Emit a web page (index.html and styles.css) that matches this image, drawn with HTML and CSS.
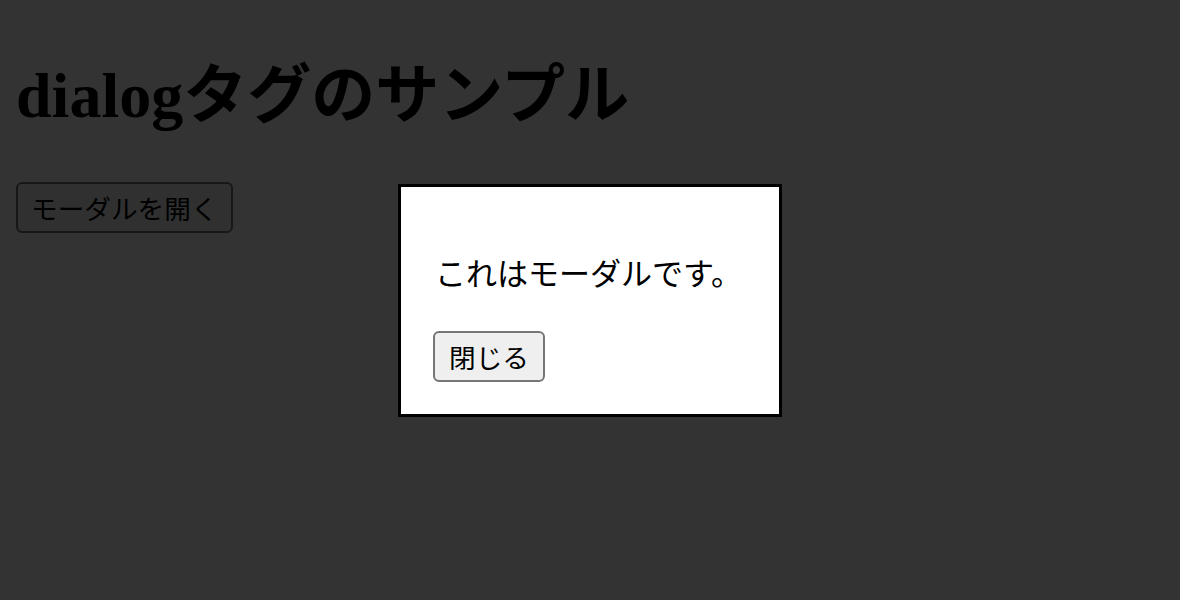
FILE: index.html
```html
<!DOCTYPE html>
<html lang="ja">
<head>
<meta charset="utf-8">
<title>dialogタグのサンプル</title>
<link rel="stylesheet" href="styles.css">
</head>
<body>
<h1 class="title">dialogタグのサンプル</h1>
<button class="btn btn-open" type="button">モーダルを開く</button>
<div class="backdrop">
  <div class="dialog" role="dialog" aria-modal="true">
    <p class="dialog-text">これはモーダルです。</p>
    <button class="btn btn-close" type="button">閉じる</button>
  </div>
</div>
</body>
</html>
```
FILE: styles.css
```css
html, body {
  margin: 0;
  padding: 0;
  background: #ffffff;
}
body {
  padding: 16px;
  font-family: "Liberation Serif", "Noto Sans CJK JP", serif;
}
.title {
  margin: 40px 0 46px;
  font-size: 64px;
  line-height: 80px;
  font-weight: bold;
  color: #000;
}
.btn {
  font-family: "Noto Sans CJK JP", "Noto Sans", sans-serif;
  font-size: 26.67px;
  line-height: 43px;
  padding: 2px 14px;
  border: 2px solid #767676;
  border-radius: 6px;
  background: #efefef;
  color: #000;
  display: block;
}
.btn-open {
  padding: 2px 13px;
}
.backdrop {
  position: fixed;
  inset: 0;
  background: rgba(0, 0, 0, 0.8);
  display: flex;
  align-items: center;
  justify-content: center;
}
.dialog {
  background: #fff;
  border: 3px solid #000;
  padding: 32px;
  width: 314px;
  color: #000;
}
.dialog-text {
  margin: 32px 0;
  padding-left: 2px;
  font-family: "Liberation Serif", "Noto Sans CJK JP", serif;
  font-size: 31px;
  line-height: 48px;
  white-space: nowrap;
}
```
